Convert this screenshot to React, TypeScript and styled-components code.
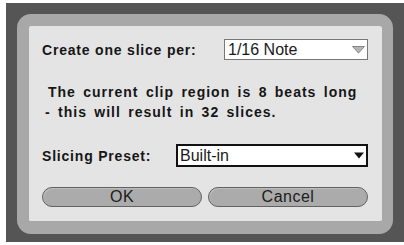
import styled, { createGlobalStyle } from "styled-components";

const GlobalStyle = createGlobalStyle`
  html, body {
    margin: 0;
    padding: 0;
    background: #ffffff;
  }
  body {
    font-family: "Liberation Sans", Arial, Helvetica, sans-serif;
  }
`;

const Backdrop = styled.div`
  margin: 3px 0 0 6px;
  width: 398px;
  height: 239px;
  background: #555555;
  padding: 11px 0 0 11px;
  box-sizing: border-box;
`;

const Frame = styled.div`
  width: 376px;
  height: 220px;
  box-sizing: border-box;
  background: #e4e4e4;
  border: solid #a8a8a8;
  border-width: 12px 11px 13px 12px;
  border-radius: 14px;
  padding: 13px 14px 0 13px;
  display: flex;
  flex-direction: column;
`;

const Row = styled.div`
  display: flex;
  align-items: center;
  justify-content: space-between;
`;

const Label = styled.span`
  font-size: 14px;
  font-weight: bold;
  letter-spacing: 0.8px;
  color: #161616;
`;

const Select = styled.div<{ $strong?: boolean; $width: number }>`
  width: ${(p) => p.$width}px;
  height: ${(p) => (p.$strong ? 23 : 21)}px;
  box-sizing: border-box;
  background: #ffffff;
  border: ${(p) => (p.$strong ? "2px solid #111111" : "1px solid #777777")};
  display: flex;
  align-items: center;
  justify-content: space-between;
  padding: 0 2px 0 ${(p) => (p.$strong ? 2 : 3)}px;
  font-size: 16px;
  color: #1a1a1a;
`;

const Message = styled.div`
  margin: 22px 0 22px 3px;
  font-size: 14px;
  font-weight: bold;
  line-height: 20px;
  letter-spacing: 1px;
  word-spacing: 2.5px;
  color: #161616;
`;

const Line = styled.div<{ $indent?: number }>`
  padding-left: ${(p) => p.$indent ?? 0}px;
  white-space: nowrap;
`;

const Buttons = styled.div`
  margin-top: 20px;
  display: flex;
  gap: 6px;
`;

const Button = styled.button`
  flex: 1;
  height: 20px;
  box-sizing: border-box;
  border: 1px solid #626262;
  border-radius: 10px;
  background: #ababab;
  box-shadow: inset 1px 1px 0 #bcbcbc;
  font-family: inherit;
  font-size: 16px;
  letter-spacing: 0.5px;
  color: #1c1c1c;
  padding: 0;
  line-height: 18px;
`;

function HollowArrow() {
  return (
    <svg width="13" height="8" viewBox="0 0 13 8">
      <polygon points="0.5,0.5 12.5,0.5 6.5,7" fill="#b4b4b4" stroke="#858585" />
    </svg>
  );
}

function SolidArrow() {
  return (
    <svg width="10" height="7" viewBox="0 0 10 7">
      <polygon points="0,0.5 10,0.5 5,6.5" fill="#111111" />
    </svg>
  );
}

export default function App() {
  return (
    <>
      <GlobalStyle />
      <Backdrop>
        <Frame>
          <Row>
            <Label>Create one slice per:</Label>
            <Select $width={144}>
              <span>1/16 Note</span>
              <HollowArrow />
            </Select>
          </Row>
          <Message>
            <Line $indent={3}>The current clip region is 8 beats long</Line>
            <Line>- this will result in 32 slices.</Line>
          </Message>
          <Row>
            <Label>Slicing Preset:</Label>
            <Select $strong $width={192}>
              <span>Built-in</span>
              <SolidArrow />
            </Select>
          </Row>
          <Buttons>
            <Button>OK</Button>
            <Button>Cancel</Button>
          </Buttons>
        </Frame>
      </Backdrop>
    </>
  );
}
